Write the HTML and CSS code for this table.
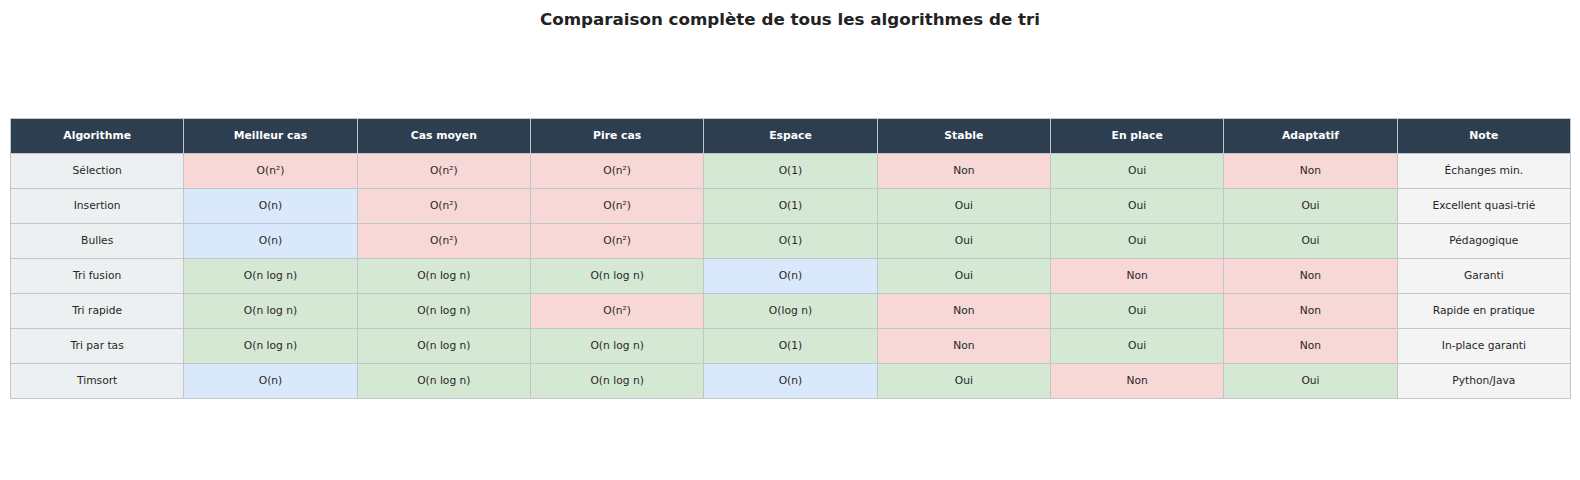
FILE: index.html
```html
<!DOCTYPE html>
<html lang="fr">
<head>
<meta charset="utf-8">
<title>Comparaison des algorithmes de tri</title>
<link rel="stylesheet" href="styles.css">
</head>
<body>
<h1 class="title">Comparaison complète de tous les algorithmes de tri</h1>
<table class="cmp">
<thead>
<tr><th>Algorithme</th><th>Meilleur cas</th><th>Cas moyen</th><th>Pire cas</th><th>Espace</th><th>Stable</th><th>En place</th><th>Adaptatif</th><th>Note</th></tr>
</thead>
<tbody>
<tr><td class="name">Sélection</td><td class="bad">O(n²)</td><td class="bad">O(n²)</td><td class="bad">O(n²)</td><td class="good">O(1)</td><td class="bad">Non</td><td class="good">Oui</td><td class="bad">Non</td><td class="note">Échanges min.</td></tr>
<tr><td class="name">Insertion</td><td class="best">O(n)</td><td class="bad">O(n²)</td><td class="bad">O(n²)</td><td class="good">O(1)</td><td class="good">Oui</td><td class="good">Oui</td><td class="good">Oui</td><td class="note">Excellent quasi-trié</td></tr>
<tr><td class="name">Bulles</td><td class="best">O(n)</td><td class="bad">O(n²)</td><td class="bad">O(n²)</td><td class="good">O(1)</td><td class="good">Oui</td><td class="good">Oui</td><td class="good">Oui</td><td class="note">Pédagogique</td></tr>
<tr><td class="name">Tri fusion</td><td class="good">O(n log n)</td><td class="good">O(n log n)</td><td class="good">O(n log n)</td><td class="best">O(n)</td><td class="good">Oui</td><td class="bad">Non</td><td class="bad">Non</td><td class="note">Garanti</td></tr>
<tr><td class="name">Tri rapide</td><td class="good">O(n log n)</td><td class="good">O(n log n)</td><td class="bad">O(n²)</td><td class="good">O(log n)</td><td class="bad">Non</td><td class="good">Oui</td><td class="bad">Non</td><td class="note">Rapide en pratique</td></tr>
<tr><td class="name">Tri par tas</td><td class="good">O(n log n)</td><td class="good">O(n log n)</td><td class="good">O(n log n)</td><td class="good">O(1)</td><td class="bad">Non</td><td class="good">Oui</td><td class="bad">Non</td><td class="note">In-place garanti</td></tr>
<tr><td class="name">Timsort</td><td class="best">O(n)</td><td class="good">O(n log n)</td><td class="good">O(n log n)</td><td class="best">O(n)</td><td class="good">Oui</td><td class="bad">Non</td><td class="good">Oui</td><td class="note">Python/Java</td></tr>
</tbody>
</table>
</body>
</html>
```
FILE: styles.css
```css
html, body {
  margin: 0;
  padding: 0;
  background: #ffffff;
  font-family: "DejaVu Sans", sans-serif;
  color: #222222;
}
.title {
  margin: 0;
  padding-top: 9px;
  height: 118px;
  box-sizing: border-box;
  text-align: center;
  font-size: 16.7px;
  font-weight: bold;
  line-height: 20px;
  color: #222222;
}
.cmp {
  margin-left: 10px;
  width: 1561px;
  border-collapse: collapse;
  table-layout: fixed;
}
.cmp th, .cmp td {
  border: 1px solid #c2c6ca;
  text-align: center;
  vertical-align: middle;
  padding: 0 0 2px 0;
  height: 32px;
  line-height: 13px;
}
.cmp th {
  background: #2c3e50;
  color: #ffffff;
  font-size: 10.8px;
  font-weight: bold;
}
.cmp td {
  font-size: 10.7px;
  color: #262626;
}
.cmp td.name { background: #ecf0f1; }
.cmp td.bad { background: #f8d7d7; }
.cmp td.good { background: #d5e8d4; }
.cmp td.best { background: #dae8fb; }
.cmp td.note { background: #f4f4f4; }
```
